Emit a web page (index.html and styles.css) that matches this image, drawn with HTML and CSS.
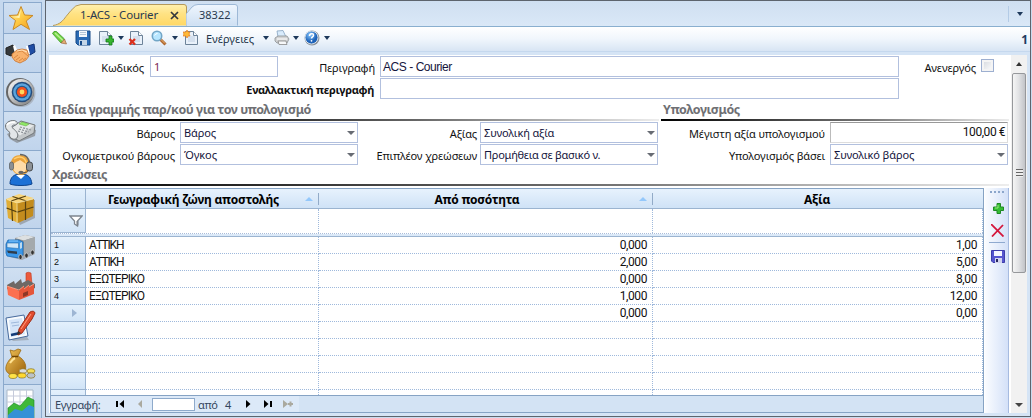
FILE: index.html
```html
<!DOCTYPE html>
<html lang="el">
<head>
<meta charset="utf-8">
<title>ACS - Courier</title>
<link rel="stylesheet" href="styles.css">
</head>
<body>
<svg class="defs" width="0" height="0" aria-hidden="true">
  <defs>
    <linearGradient id="gold" x1="0" y1="0" x2="1" y2="1"><stop offset="0" stop-color="#fff0a0"/><stop offset=".5" stop-color="#ffcb45"/><stop offset="1" stop-color="#f09a1c"/></linearGradient>
    <linearGradient id="tabfill" x1="0" y1="0" x2="0" y2="1"><stop offset="0" stop-color="#fff0ae"/><stop offset=".45" stop-color="#ffe283"/><stop offset="1" stop-color="#ffd865"/></linearGradient>
    <linearGradient id="tabidle" x1="0" y1="0" x2="0" y2="1"><stop offset="0" stop-color="#eff6fe"/><stop offset="1" stop-color="#cfe0f3"/></linearGradient>
    <linearGradient id="steel" x1="0" y1="0" x2="1" y2="1"><stop offset="0" stop-color="#fff"/><stop offset="1" stop-color="#777"/></linearGradient>
    <radialGradient id="bluebtn" cx=".4" cy=".3"><stop offset="0" stop-color="#8ccaff"/><stop offset="1" stop-color="#1d62b8"/></radialGradient>
    <linearGradient id="bag" x1="0" y1="0" x2="1" y2="1"><stop offset="0" stop-color="#f4c65c"/><stop offset="1" stop-color="#9a6008"/></linearGradient>
    <symbol id="disk" viewBox="0 0 16 16"><path d="M1 1h14v14H3l-2-2z" fill="#2a6ab4" stroke="#174a88"/><path d="M4 1h8v6H4z" fill="#f4f8fc"/><path d="M5 2.500h6M5 4.500h6" stroke="#b5c6d8"/><path d="M4 10h8v5H4z" fill="#c4d6e8"/><path d="M5 11h2v4H5z" fill="#174a88"/></symbol>
    <symbol id="sheet" viewBox="0 0 16 16"><path d="M1.500 1.500h8l4 4v9h-12z" fill="#e9f1fa" stroke="#6d8399"/><path d="M9.500 1.500v4h4" fill="#fff" stroke="#6d8399"/><path d="M4 7h7M4 9h7M4 11h7" stroke="#b5c8dc" stroke-width=".8"/></symbol>
  </defs>
</svg>
<div class="app">
  <nav class="sidebar">
    <a class="side first"><svg width="34" height="30" viewBox="0 0 34 30"><path d="M17 3.500l3.500 8.500 8.500.5-6.800 5.500 3.300 8.500-8.500-5.200-8 5.200 2.500-9-6.500-5 8.500-.5z" fill="url(#gold)" stroke="#c98a27"/><path d="M17 6l-2.500 7-6 1 7 1z" fill="#fff4b8"/></svg></a>
    <a class="side"><svg width="34" height="38" viewBox="0 0 34 38"><path d="M2 14l7-3 3 7-5 4-5-2z" fill="#35393c" stroke="#222"/><path d="M24 12l6-2 1 8-5 3z" fill="#1f4da4" stroke="#143474"/><path d="M9 12l2-1 3 7-3 2zM22 12l2 0 2 8-2 1z" fill="#fff"/><path d="M8 20l5-4 5-1 5 1 2 6-3 4-6 3-5-2-3-4z" fill="#f9b26d" stroke="#c9742f" stroke-width=".8"/><path d="M13 18l5-1 6 5M10 24l4-3M12 26l4-3M15 27l4-3M19 26l3-2" fill="none" stroke="#d07f3a" stroke-width=".8"/><path d="M13 17l5-1 5 2" stroke="#ffe0b8" fill="none"/></svg></a>
    <a class="side"><svg width="34" height="38" viewBox="0 0 34 38"><circle cx="17.500" cy="20" r="14" fill="#91959b" opacity=".5"/><circle cx="16" cy="19" r="14" fill="#666"/><circle cx="17" cy="19" r="13" fill="url(#steel)"/><circle cx="18" cy="19" r="10.300" fill="#244d7e"/><circle cx="18" cy="19" r="8.800" fill="#5ba4dc"/><circle cx="18" cy="19" r="6.300" fill="#255990"/><circle cx="18" cy="19" r="5.100" fill="#f4521c"/><circle cx="18" cy="19" r="2.400" fill="#ffd75d"/></svg></a>
    <a class="side"><svg width="34" height="38" viewBox="0 0 34 38"><path d="M3 22l3 5 7 4 18-7 1-6-13-4z" fill="#777" opacity=".6"/><path d="M7 16l10-7 14 4-1 8-15 8-8-5z" fill="#c4c8ca" stroke="#74797c"/><path d="M8 16l9-6 13 3.500-14 10z" fill="#e5e8e9"/><path d="M1.500 14c0-4 6-6.500 10-5 3 1 2 4-1 4-3 0-3 2-1 4 3 2 5 5 4 8-2 4-7 2-8-1 0-2 1-3-1-5-2-1-3-3-3-5z" fill="#e3e6e8" stroke="#6d7275"/><path d="M3 13c2-3 5-3 8-3" stroke="#fff" fill="none" stroke-width="1.500"/><path d="M15 12l3-2 7 2-3 2z" fill="#90ea66" stroke="#5da13d" stroke-width=".5"/><g stroke="#8a8f95" stroke-width="1.200" stroke-dasharray="2 1.200"><path d="M16 15l11 3M15 17l10 3M14 19l9 3"/></g></svg></a>
    <a class="side"><svg width="34" height="38" viewBox="0 0 34 38"><path d="M6 33c0-7 4-10 11-10s10 3 11 10c-5 2-17 2-22 0z" fill="#1b70d6" stroke="#0c438e"/><path d="M12 24l5 4 4-4z" fill="#fff"/><path d="M7 15C6 7 11 4 17 4s10 3 9 11c0 5-4 9-9 9S8 20 7 15z" fill="#eaa23a"/><path d="M9 16c0-5 4-5 7-7l6 4c2 7-3 10-7 10-4-1-6-4-6-7z" fill="#ffdca8"/><path d="M10 8c6-4 12-2 13 7" fill="none" stroke="#ffcf70" stroke-width="1.500"/><path d="M16 3.500c6 0 9 4 9 9" fill="none" stroke="#62666a" stroke-width="1.500"/><rect x="5.500" y="11" width="4" height="8" rx="2" fill="#8b8f93" stroke="#55595c" stroke-width=".7"/><rect x="22.500" y="11" width="6" height="9" rx="2.700" fill="#8e9295" stroke="#45494c"/><path d="M25 19q-2 3-7 3" fill="none" stroke="#555"/><ellipse cx="17" cy="21.500" rx="2.700" ry="1.700" fill="#666"/></svg></a>
    <a class="side"><svg width="34" height="38" viewBox="0 0 34 38"><path d="M5 11l26-1 0 18-15 7z" fill="#777" opacity=".5"/><path d="M2 9l11 4 1 20L4 28z" fill="#e0ad37"/><path d="M13 13l17-4-1 17-15 7z" fill="#c38c1d"/><path d="M2 9l13-5 15 4-17 5z" fill="#f9d67c"/><path d="M2.500 18l11 4 16-5M7.500 11l1 20M21.500 11v19M8.500 6.500l14 4.500M22 6L7 11" fill="none" stroke="#57410f" stroke-width="1.200"/><path d="M13 13.500v19M3 9.500l10 3.500 16-4" stroke="#fbe39a" fill="none" stroke-width=".8"/></svg></a>
    <a class="side"><svg width="34" height="38" viewBox="0 0 34 38"><path d="M6 28l12 3 13-6v-5z" fill="#777" opacity=".5"/><path d="M11 9l10-3 10 2v13l-11 6-9-4z" fill="#8d9295"/><path d="M11 9l10-3 10 2-11 3.500z" fill="#dde0e1"/><path d="M20 11.500L31 8v13l-11 5z" fill="#a4a9ac"/><path d="M2 15l2-4h11l4 2v13l-4 3-12-2-1-3z" fill="#3b97e8" stroke="#1c6ab4" stroke-width=".8"/><path d="M3 14h11.500v5.500L3 18.500z" fill="#cfe6f8" stroke="#2b70ac" stroke-width=".6"/><path d="M16 14l2-1v6l-2 1z" fill="#bddaf0"/><path d="M3 21.500l10 1V25L4 24z" fill="#2f3d4c"/><path d="M5 12h9" stroke="#8accff"/><g fill="#333" stroke="#c9ccce" stroke-width=".8"><ellipse cx="16.500" cy="28" rx="1.800" ry="2.500"/><ellipse cx="22.500" cy="26.500" rx="1.800" ry="2.500"/><ellipse cx="28.500" cy="23.500" rx="1.800" ry="2.500"/></g></svg></a>
    <a class="side"><svg width="34" height="38" viewBox="0 0 34 38"><path d="M22 5q2-1.500 5 0l1 12h-6z" fill="#ec5b3d" stroke="#bf3b20" stroke-width=".6"/><path d="M3 17l7-4 1 3 6-5 1 4 6-3 7 4v4l-14 6L3 21z" fill="#6e6865"/><path d="M3 18l9 3 3 2v9L4 27z" fill="#fb7050"/><path d="M15 22l5-4v3l5-4v2l5-3v10l-15 6z" fill="#e5563a"/><path d="M3 18l12 4 5-4M20 21l5-4M25 19l5-3" fill="none" stroke="#ffa78d" stroke-width=".8"/><path d="M19 25l5-2v4l-5 2z" fill="#8e3727"/></svg></a>
    <a class="side"><svg width="34" height="38" viewBox="0 0 34 38"><path d="M6 31l17-1 2 3-16 1z" fill="#777" opacity=".4"/><path d="M2 11l18-3 4 21-19 4z" fill="#f8fbfe" stroke="#476a9c"/><path d="M5 13l13-2 3 16-14 3z" fill="#d5e5f8"/><path d="M7 16l8-1M8 19l7-1" stroke="#9eb9db"/><path d="M7 28l9-2" fill="none" stroke="#143c78" stroke-width="2.500"/><path d="M26 5q4-2 5 1l-3 6-10 14-4 2 1-6z" fill="#e24d30" stroke="#9e2c15"/><path d="M14 24l3 2-4 2z" fill="#333"/><path d="M27 7L17 22" stroke="#ff9d7e"/></svg></a>
    <a class="side"><svg width="34" height="38" viewBox="0 0 34 38"><path d="M6 4l4 1 4-2 3 1-3 6c7 4 9 10 7 15-3 6-17 6-19-1-1-5 3-10 6-13z" fill="url(#bag)" stroke="#9b6a12" stroke-width=".8"/><path d="M8 10.500h6" stroke="#704300" stroke-width="1.500"/><path d="M6 17c2-3 3-4 5-5" stroke="#ffe394" stroke-width="2" fill="none"/><g stroke="#8b721d" stroke-width=".7"><ellipse cx="27" cy="25" rx="4" ry="2.300" fill="#f3dd5a"/><ellipse cx="19" cy="25" rx="4" ry="2.300" fill="#d8dbe0"/><ellipse cx="9" cy="30" rx="4.200" ry="2.500" fill="#ffe248"/><ellipse cx="18" cy="29.500" rx="4.200" ry="2.500" fill="#ffd830"/><ellipse cx="27" cy="29.500" rx="4" ry="2.700" fill="#bbc2c9"/></g></svg></a>
    <a class="side"><svg width="34" height="38" viewBox="0 0 34 38"><path d="M3 5h26v30H3z" fill="#fff" stroke="#a9b8c8"/><path d="M9.500 5v25M16 5v25M22.500 5v25M3 11h26M3 17h26M3 23h26" stroke="#c6cbdb"/><path d="M4 23l6-5 6 3 8-9 6 3v20H4z" fill="#3fb838" stroke="#168321" stroke-width=".6"/><path d="M4 30l7-6 7 2 7-6 5 2v13H4z" fill="#3591d6"/></svg></a>
  </nav>

  <main class="window">
    <header class="tabs">
      <div class="tab active"><svg class="shape" width="135" height="22" viewBox="0 0 135 22"><path d="M0 21.500c7-1 10-5 13-9l5-6Q22.500.5 28 .5h103q2.500 0 2.500 2.500v18.500" fill="url(#tabfill)" stroke="#b4995b"/></svg><span class="t-active">1-ACS - Courier</span><svg class="close" width="9" height="9" viewBox="0 0 9 9"><path d="M1 1l7 7M8 1L1 8" stroke="#34383d" stroke-width="1.700"/></svg></div>
      <div class="tab idle"><svg class="shape" width="53" height="22" viewBox="0 0 53 22"><path d="M0 21.500V10l6-7Q8.500.5 12 .5h37q2.500 0 2.500 2.500v18.500" fill="url(#tabidle)" stroke="#9db8d6"/></svg><span class="t-idle">38322</span></div>
      <div class="tabmenu"><i class="caret"></i></div>
    </header>

    <div class="toolbar">
      <svg class="pencil" width="16" height="16" viewBox="0 0 16 16"><path d="M.5 3.500q1-3 4-2L12.500 9 9 13z" fill="#6fd044" stroke="#3f9a28" stroke-width=".8"/><path d="M3 3l8 7.500" stroke="#b9f392" stroke-width="1.500"/><path d="M12.500 9l2 5-5.500-1z" fill="#e2ac72" stroke="#915b34" stroke-width=".6"/></svg>
      <svg class="save" width="16" height="16"><use href="#disk"/></svg>
      <svg class="new" width="16" height="16" viewBox="0 0 16 16"><use href="#sheet"/><path d="M8 9h3V6h3v3h2v3h-2v3h-3v-3H8z" fill="#38b52f" stroke="#12761b" stroke-width=".8"/></svg><i class="caret c1"></i>
      <svg class="del" width="16" height="16" viewBox="0 0 16 16"><use href="#sheet" x="1"/><path d="M1.500 9l5.500 5.500M7 9l-5.500 5.500" stroke="#dc2e1b" stroke-width="2.300"/></svg>
      <svg class="find" width="16" height="16" viewBox="0 0 16 16"><path d="M8.500 8.500l6 6" stroke="#ae662e" stroke-width="3"/><path d="M9 8.500l5 5" stroke="#eeb875"/><circle cx="6" cy="6" r="4.700" fill="#b7e6ff" stroke="#72a6c7" stroke-width="1.600"/><path d="M3.500 5.500q1-2 3-2" stroke="#fff" fill="none"/></svg><i class="caret c2"></i>
      <svg class="act" width="16" height="16" viewBox="0 0 16 16"><use href="#sheet" x="1"/><path d="M4 0l1 2 2 0-1 2 1 2-2 0-1 2-1-2-3 0 1-2-1-2 3 0z" fill="#ffba38" stroke="#e57c1d" stroke-width=".7"/></svg>
      <span class="actions">Ενέργειες</span><i class="caret c3"></i>
      <svg class="print" width="16" height="16" viewBox="0 0 16 16"><path d="M4 7L3 1l6-.5L12 7" fill="#d8ebfc" stroke="#86a3c0" stroke-width=".8"/><path d="M1 8l3-2h9l2 3-2 4H3l-2-2z" fill="#d1d2d3" stroke="#8a8f93" stroke-width=".8"/><path d="M4 11h8l1 3.500H5z" fill="#f7f8f9" stroke="#888" stroke-width=".8"/><path d="M3 9h10" stroke="#fff"/></svg><i class="caret c4"></i>
      <svg class="help" width="16" height="16" viewBox="0 0 16 16"><circle cx="8" cy="8" r="7.500" fill="#8a9199"/><circle cx="7.500" cy="7.500" r="6.500" fill="url(#bluebtn)" stroke="#d5e0eb"/><path d="M5.500 6c0-3 4-3 4-.8 0 1.800-2 1.500-2 3.300" fill="none" stroke="#fff" stroke-width="1.500"/><circle cx="7.500" cy="10.800" r=".9" fill="#fff"/></svg><i class="caret c5"></i>
      <b class="count">1</b>
    </div>

    <div class="content">
      <div class="form">
        <div class="row r1">
          <label class="l-code">Κωδικός</label><div class="field f-code pink">1</div>
          <label class="l-desc">Περιγραφή</label><div class="field f-desc sans">ACS - Courier</div>
          <label class="l-off">Ανενεργός</label><i class="check"></i>
        </div>
        <div class="row r2"><label class="l-alt">Εναλλακτική περιγραφή</label><div class="field f-desc"></div></div>
        <div class="heads">
          <h2 class="h-wide"><span class="s1">Πεδία γραμμής παρ/κού για τον υπολογισμό</span></h2>
          <h2 class="h-calc"><span class="s2">Υπολογισμός</span></h2>
        </div>
        <div class="row r3">
          <label class="la">Βάρους</label><div class="field combo">Βάρος</div>
          <label class="lb">Αξίας</label><div class="field combo">Συνολική αξία</div>
          <label class="lc">Μέγιστη αξία υπολογισμού</label><div class="field money">100,00 €</div>
        </div>
        <div class="row r4">
          <label class="la">Ογκομετρικού βάρους</label><div class="field combo">Όγκος</div>
          <label class="lb">Επιπλέον χρεώσεων</label><div class="field combo tight">Προμήθεια σε βασικό ν.</div>
          <label class="lc">Υπολογισμός βάσει</label><div class="field combo">Συνολικό βάρος</div>
        </div>
        <h2 class="h-fees"><span class="s3">Χρεώσεις</span></h2>

        <div class="gridwrap">
          <section class="grid">
            <div class="ghead">
              <div class="rh"></div>
              <div class="th sort"><span class="g1">Γεωγραφική ζώνη αποστολής</span></div>
              <div class="th sort"><span class="g2">Από ποσότητα</span></div>
              <div class="th last"><span class="g3">Αξία</span></div>
            </div>
            <div class="gfilter"><div class="rh"><svg width="14" height="12" viewBox="0 0 14 12"><path d="M.8 1h12.400L8.500 6v5L5.500 9V6z" fill="#fff" stroke="#7d858e" stroke-width="1.300"/><path d="M8.500 6v4.500" stroke="#7d858e" stroke-width="2"/></svg></div><div></div><div></div><div></div></div>
            <div class="strip"></div>
            <div class="gbody">
              <div class="gr"><div class="rh">1</div><div>ΑΤΤΙΚΗ</div><div>0,000</div><div>1,00</div></div>
              <div class="gr"><div class="rh">2</div><div>ΑΤΤΙΚΗ</div><div>2,000</div><div>5,00</div></div>
              <div class="gr"><div class="rh">3</div><div class="long">ΕΞΩΤΕΡΙΚΟ</div><div>0,000</div><div>8,00</div></div>
              <div class="gr"><div class="rh">4</div><div class="long">ΕΞΩΤΕΡΙΚΟ</div><div>1,000</div><div>12,00</div></div>
              <div class="gr"><div class="rh cur"><i></i></div><div></div><div>0,000</div><div>0,00</div></div>
              <div class="gr"><div class="rh"></div><div></div><div></div><div></div></div>
              <div class="gr"><div class="rh"></div><div></div><div></div><div></div></div>
              <div class="gr"><div class="rh"></div><div></div><div></div><div></div></div>
              <div class="gr"><div class="rh"></div><div></div><div></div><div></div></div>
              <div class="gr"><div class="rh"></div><div></div><div></div><div></div></div>
            </div>
            <footer class="gnav">
              <span class="n-rec">Εγγραφή:</span>
              <svg class="n-first" width="9" height="8" viewBox="0 0 9 8"><path d="M0 1h2v6H0zM8 0v8L3.500 4z"/></svg>
              <svg class="n-prev" width="5" height="8" viewBox="0 0 5 8"><path d="M4 0v8L0 4z" fill="#aaa99f"/></svg>
              <span class="n-box"></span><span class="n-of">από</span><span class="n-tot">4</span>
              <svg class="n-next" width="5" height="8" viewBox="0 0 5 8"><path d="M0 0v8l4.500-4z"/></svg>
              <svg class="n-last" width="9" height="8" viewBox="0 0 9 8"><path d="M1 0v8l4.500-4zM7 1h2v6H7z"/></svg>
              <svg class="n-new" width="11" height="8" viewBox="0 0 11 8"><path d="M0 0v8l5-4zM5 3h1.500V1.500h2V3H10v2H8.500v1.500h-2V5H5z" fill="#aaa99f"/></svg>
              <span class="n-rest"></span>
            </footer>
          </section>
          <aside class="gtools">
            <i class="grip"></i>
            <svg class="t-add" width="11" height="11" viewBox="0 0 11 11"><path d="M4 .5h3.500V4h3v3.500h-3v3H4v-3H.5V4H4z" fill="#35bd34" stroke="#208924"/><path d="M5 2v3H2" stroke="#95ed77" fill="none"/></svg>
            <svg class="t-del" width="13" height="13" viewBox="0 0 13 13"><path d="M0 0l12.500 12.500M12 1L1 12.500" stroke="#d4163c" stroke-width="1.800"/></svg>
            <i class="sep"></i>
            <svg class="t-save" width="14" height="13" viewBox="0 0 14 13"><path d="M.5.500h13v12H2L.5 11z" fill="#5656cf" stroke="#3d3daa"/><path d="M3 1h8v5H3z" fill="#f5f6ff"/><path d="M4 8h7v5H4z" fill="#d2d4ef"/><path d="M5 9h2v3H5z" fill="#28285f"/></svg>
          </aside>
        </div>
      </div>
      <div class="scroll"><i class="up"></i><div class="thumb"><i></i></div><i class="down"></i></div>
    </div>
  </main>
</div>
</body>
</html>
```
FILE: styles.css
```css
* { box-sizing: border-box; }
body { margin: 0; width: 1032px; height: 418px; overflow: hidden; font: 12px/15px "Noto Sans", "Open Sans", sans-serif; color: #111; background: #c9dbef; }
.defs { position: absolute; }
svg { display: block; flex: none; }
i { display: block; flex: none; }
.app { display: flex; height: 418px; }

/* Module bar */
.sidebar { width: 42px; margin-right: 3px; padding: 2px 0 0 3px; height: 418px; overflow: hidden; background: #c5d8ee; }
.side { display: block; height: 39px; border: 1px solid #8ba9cc; border-bottom: 0; background: linear-gradient(#cfdff1, #c0d4ec); }
.side.first { height: 31px; }

/* Document window */
.window { width: 986px; height: 417px; border: 1px solid #5d646d; background: #d5e4f5; }
.tabs { display: flex; height: 26px; padding: 3px 0 0 7px; border-bottom: 1px solid #8aafcf; background: linear-gradient(#cfdff1, #dae8f7); }
.tab { position: relative; height: 22px; display: flex; align-items: center; color: #2a3a50; white-space: nowrap; }
.active { width: 133px; padding-left: 27px; font-size: 11.5px; letter-spacing: -.2px; padding-bottom: 2px; }
.idle { width: 53px; padding-left: 13px; font-size: 11px; padding-bottom: 2px; }
.shape { position: absolute; left: 0; top: 0; }
.tab span, .close { position: relative; }
.close { margin-left: auto; margin-right: 7px; top: 1px; }
.tabmenu { margin: 2px 7px 4px auto; width: 15px; display: flex; justify-content: flex-end; align-items: center; border-left: 1px solid #b3cbe6; }
.caret { border: 3px solid transparent; border-top: 4px solid #1e395b; border-bottom: 0; width: 6px; height: 4px; }
.toolbar { display: flex; align-items: center; height: 25px; padding-left: 6px; padding-right: 2px; border-bottom: 1px solid #c5d8ee; background: linear-gradient(#fff, #f0f6fc 50%, #d8e5f4); }
.toolbar > svg { position: relative; top: -1px; }
.toolbar > .caret { position: relative; top: -1px; }
.save { margin-left: 7px; } .new { margin-left: 7px; } .c1 { margin-left: 4px; }
.del { margin-left: 4px; } .find { margin-left: 7px; } .c2 { margin-left: 5px; }
.act { margin-left: 5px; } .actions { margin-left: 7px; width: 50px; color: #26364a; white-space: nowrap; font-size: 11px; padding-bottom: 1px; }
.c3 { margin-left: 7px; } .print { margin-left: 5px; } .c4 { margin-left: 3px; } .help { margin-left: 5px; } .c5 { margin-left: 4px; }
.count { margin-left: auto; font-size: 12px; color: #1f3a60; }

/* Form */
.content { display: flex; height: 361px; margin: 3px 3px 0; border-bottom: 3px solid #d5e4f5; background: #fff; }
.form { width: 963px; height: 358px; }
.row { display: flex; align-items: center; height: 21px; margin-bottom: 1px; font-size: 11px; }
.r1 { margin-top: 1px; }
label { text-align: right; white-space: nowrap; flex: none; padding-top: 1px; letter-spacing: -.12px; }
.field { flex: none; height: 21px; border: 1px solid #b2c0de; padding: 3px 0 0 3px; color: #15153c; white-space: nowrap; background: #fff; line-height: 14px; letter-spacing: -.1px; }
.tight { letter-spacing: -.25px; }
.pink { color: #7a2752; }
.l-code { width: 95px; margin-right: 6px; } .f-code { width: 128px; }
.l-desc { width: 97px; margin-right: 5px; } .f-desc { width: 519px; }
.l-off { width: 77px; margin-right: 5px; }
.sans { font: 12px/14px "Liberation Sans", sans-serif; letter-spacing: -.45px; padding-left: 2px; }
.check { width: 13px; height: 13px; margin-top: -2px; border: 1px solid #9dafd0; background: linear-gradient(135deg, #d2d6dc, #fff); box-shadow: inset 0 0 0 2px #f4f4f4; }
.l-alt { width: 325px; margin-right: 6px; font-weight: bold; letter-spacing: -.3px; }
.heads { display: flex; height: 22px; gap: 2px; }
h2 { margin: 0; font-size: 12.5px; letter-spacing: -.45px; line-height: 16px; color: #6f7074; white-space: nowrap; padding: 2px 0 0 2px; border-bottom: 2px solid; border-image: linear-gradient(90deg, #000, #777 60%, #eee) 1; }
.h-wide { width: 609px; height: 21px; border-image: linear-gradient(90deg, #000 20%, #666 60%, #eee) 1; }
.h-calc { width: 348px; height: 21px; }
.la { width: 126px; margin-right: 5px; }
.lb { width: 119px; margin-right: 3px; }
.lc { width: 167px; margin-right: 5px; }
.combo { position: relative; width: 178px; }
.combo::after { content: ""; position: absolute; right: 2px; top: 8px; border: 4px solid transparent; border-top: 4px solid #686c74; border-bottom: 0; }
.money { width: 178px; text-align: right; padding-right: 2px; font: 12px/14px Roboto, sans-serif; letter-spacing: -.45px; border-color: #999 #ddd #ddd #bbb; color: #111; padding-top: 2px; }
.h-fees { width: 959px; height: 20px; margin-left: 1px; padding-top: 1px; }
.heads .h-wide { margin-left: 1px; }

/* Charges grid */
.gridwrap { display: flex; height: 225px; margin: 2px 0 0 1px; }
.grid { width: 934px; height: 225px; border: 1px solid #86a3c4; overflow: hidden; }
.ghead, .gfilter, .gr { display: grid; grid-template-columns: 35px 233px 334px 330px; }
.ghead { height: 20px; background: linear-gradient(#e7f2fd, #cfe2f6); border-bottom: 1px solid #9bb4d0; }
.rh { background: linear-gradient(#e3f0fc, #d1e4f7); border-right: 1px solid #9bb4d0; }
.th { position: relative; display: flex; justify-content: center; padding-top: 3px; font-weight: bold; font-size: 12px; letter-spacing: -.2px; line-height: 15px; color: #000; white-space: nowrap; }
.th::before { content: ""; position: absolute; right: 0; top: 4px; height: 12px; border-right: 1px solid #92abc8; }
.th.last { padding-right: 2px; }
.th.last::before { display: none; }
.sort { padding-right: 18px; }
.sort::after { content: ""; position: absolute; right: 6px; top: 8px; border: 4px solid transparent; border-bottom: 4px solid #94c8fb; border-top: 0; }
.gfilter { height: 25px; border-bottom: 1px dotted #a9bcd9; }
.gfilter .rh { display: flex; align-items: center; justify-content: flex-end; padding-right: 2px; border-bottom: 1px solid #9bb4d0; }
.gfilter > div + div, .gr > div + div { border-right: 1px dotted #9fb9dc; }
.strip { height: 3px; background: #dbe9f8; border-bottom: 1px solid #9bb4d0; }
.gbody { height: 158px; overflow: hidden; }
.gr { height: 17px; font: 12px/14px Roboto, sans-serif; }
.gr > div { padding: 1px 5px 0 4px; border-bottom: 1px dotted #9fb9dc; text-align: right; letter-spacing: -.4px; }
.gr > div:nth-child(2) { text-align: left; letter-spacing: -1.2px; padding-left: 3px; }
.gr > div.long:nth-child(2) { letter-spacing: -.75px; }
.gr .rh { border-bottom: 1px solid #9bb4d0; text-align: left; font: 9px/15px "Liberation Sans", sans-serif; padding: 1px 0 0 3px; }
.cur i { margin: 3px 0 0 18px; border: 4px solid transparent; border-left: 5px solid #9db5d3; border-right: 0; width: 5px; height: 8px; }
.gnav { display: flex; align-items: center; height: 18px; border-top: 1px solid #86a3c4; background: #dce9f8; color: #34465e; font-size: 11px; }
.gnav svg { position: relative; top: -1px; }
.n-rec { margin-left: 4px; width: 45px; white-space: nowrap; letter-spacing: -.4px; }
.n-first { margin-left: 16px; } .n-prev { margin-left: 13px; }
.n-box { margin-left: 9px; width: 43px; height: 13px; background: #fff; border: 1px solid #8eaacb; }
.n-of { margin-left: 3px; width: 19px; letter-spacing: -.3px; } .n-tot { margin-left: 8px; width: 7px; }
.n-next { margin-left: 14px; } .n-last { margin-left: 12px; } .n-new { margin-left: 11px; }
.n-rest { flex: 1; height: 17px; margin-left: 5px; background: #d3e3f4; }
.gtools { display: flex; flex-direction: column; align-items: center; width: 24px; height: 225px; margin-left: 1px; border-right: 1px solid #a6bbe0; background: linear-gradient(90deg, #fafcff, #d4e1f8); padding-top: 3px; }
.grip { width: 14px; height: 2px; background: repeating-linear-gradient(90deg, #8ca6cb 0 2px, transparent 2px 4px); }
.t-add { margin-top: 10px; margin-left: 3px; } .t-del { margin-top: 10px; margin-left: 1px; }
.sep { width: 16px; height: 1px; margin-top: 5px; background: #8ea9cf; }
.t-save { margin-top: 7px; margin-left: 3px; }

/* Vertical scrollbar */
.scroll { display: flex; flex-direction: column; align-items: center; width: 16px; height: 358px; background: #f1f1f1; }
.up { width: 6px; height: 4px; margin-top: 7px; border: 3px solid transparent; border-bottom: 4px solid #333; border-top: 0; }
.down { width: 8px; height: 4px; margin: auto 0 6px; border: 4px solid transparent; border-top: 4px solid #444; border-bottom: 0; }
.thumb { width: 14px; height: 200px; margin-top: 7px; border: 1px solid #96989b; border-radius: 2px; background: linear-gradient(90deg, #f5f5f5, #e2e3e5 45%, #c2c4c8); padding: 95px 0 0 3px; }
.thumb i { width: 7px; height: 8px; background: repeating-linear-gradient(#666 0 1px, #eee 1px 3px); }
```
